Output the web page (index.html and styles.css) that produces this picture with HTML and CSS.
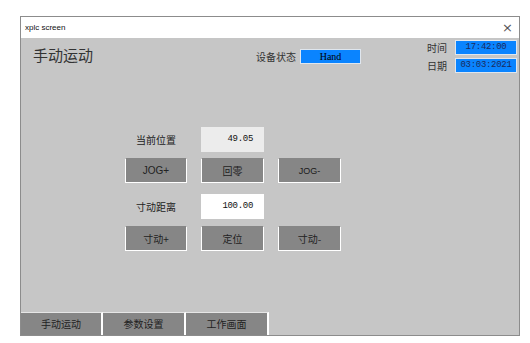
FILE: index.html
```html
<!DOCTYPE html>
<html lang="zh">

<head>
    <meta charset="UTF-8">
    <meta name="viewport" content="width=device-width, initial-scale=1.0">
    <title>xplc screen</title>
    <link rel="stylesheet" href="styles.css">
</head>

<body>

    <div class="window">
        <!-- TITLE BAR -->
        <div class="titlebar">
            <span class="app-name">xplc screen</span>
            <span class="close">&times;</span>
        </div>

        <div class="screen">
            <div class="header">
                <div class="page-title">手动运动</div>
                <div class="status">
                    <span class="caption">设备状态</span>
                    <span class="status-box">Hand</span>
                </div>
                <div class="clock">
                    <span class="caption">时间</span>
                    <span class="clock-box">17:42:00</span>
                    <span class="caption">日期</span>
                    <span class="clock-box">03:03:2021</span>
                </div>
            </div>

            <div class="controls">
                <div class="group">
                    <div class="label">当前位置</div>
                    <div class="value readonly">49.05</div>
                    <div></div>
                    <button class="btn btn-latin">JOG+</button>
                    <button class="btn">回零</button>
                    <button class="btn btn-small">JOG-</button>
                </div>
                <div class="group second">
                    <div class="label">寸动距离</div>
                    <div class="value">100.00</div>
                    <div></div>
                    <button class="btn">寸动+</button>
                    <button class="btn">定位</button>
                    <button class="btn">寸动-</button>
                </div>
            </div>

            <!-- TABS -->
            <div class="tabs">
                <div class="tab">手动运动</div>
                <div class="tab">参数设置</div>
                <div class="tab">工作画面</div>
            </div>
        </div>
    </div>

</body>

</html>
```

FILE: styles.css
```css
*{
    padding: 0;
    margin: 0;
    box-sizing: border-box;
}
body{
    background-color: #fff;
    font-family: "Noto Sans CJK SC", "Liberation Sans", sans-serif;
    color: #222;
}
.window{
    margin: 16px 0 0 20px;
    width: 500px;
    height: 320px;
    border: 1px solid #8c8c8c;
    display: flex;
    flex-direction: column;
}
.titlebar{
    height: 21px;
    background-color: #fff;
    display: flex;
    align-items: center;
    justify-content: space-between;
    padding: 0 6px 0 4px;
}
.app-name{
    font-family: "Liberation Sans", sans-serif;
    font-size: 8px;
    color: #111;
}
.close{
    font-family: "DejaVu Sans", sans-serif;
    font-size: 13px;
    line-height: 13px;
    color: #555;
}
.screen{
    flex: 1;
    background-color: #c6c6c6;
    display: flex;
    flex-direction: column;
}
.header{
    height: 37px;
    display: grid;
    grid-template-columns: 235px 1fr auto;
    padding-right: 2px;
}
.page-title{
    font-size: 15px;
    line-height: 16px;
    margin: 9px 0 0 12px;
    color: #333;
}
.caption{
    font-size: 10px;
    line-height: 14px;
    color: #333;
}
.status{
    display: flex;
    align-items: center;
    gap: 4px;
    margin-top: 11px;
    align-self: start;
}
.status-box{
    width: 61px;
    height: 15px;
    background-color: #0a84ff;
    border: 1px solid #dfe6ee;
    font-family: "Liberation Serif", serif;
    font-size: 10px;
    line-height: 13px;
    text-align: center;
    color: #000;
}
.clock{
    display: grid;
    grid-template-columns: auto 62px;
    column-gap: 8px;
    row-gap: 3px;
    margin-top: 2px;
    align-items: center;
    align-self: start;
}
.clock-box{
    height: 15px;
    background-color: #0a84ff;
    border: 1px solid #dfe6ee;
    font-family: "Liberation Mono", monospace;
    font-size: 9px;
    line-height: 13px;
    letter-spacing: -0.3px;
    text-align: center;
    color: #1b2a5c;
}
.controls{
    margin: 52px 0 0 104px;
}
.group{
    display: grid;
    grid-template-columns: 62px 63px 63px;
    grid-template-rows: 25px 25px;
    column-gap: 14px;
    row-gap: 6px;
}
.second{
    margin-top: 11px;
    row-gap: 7px;
}
.label{
    font-size: 10px;
    align-self: center;
    text-align: center;
    color: #222;
}
.value{
    background-color: #fff;
    font-family: "Liberation Mono", monospace;
    font-size: 9px;
    letter-spacing: -0.3px;
    line-height: 25px;
    text-align: right;
    padding-right: 11px;
    color: #111;
}
.readonly{
    background-color: #ececec;
}
.btn{
    background-color: #868686;
    border: 1px solid #fff;
    border-top-color: #868686;
    font-family: "Noto Sans CJK SC", "Liberation Sans", sans-serif;
    font-size: 10px;
    color: #222;
}
.btn-latin{
    font-family: "Liberation Sans", sans-serif;
    font-size: 10px;
}
.btn-small{
    font-family: "Liberation Sans Narrow", "Liberation Sans", sans-serif;
    font-size: 9px;
    color: #1a1a1a;
}
.tabs{
    margin-top: auto;
    display: flex;
    height: 23px;
}
.tab{
    width: 83px;
    background-color: #868686;
    border-top: 1px solid #e6e6e6;
    border-right: 2px solid #fff;
    font-size: 10px;
    line-height: 21px;
    text-align: center;
    color: #222;
}
.tab:first-child{
    width: 82px;
}
```
